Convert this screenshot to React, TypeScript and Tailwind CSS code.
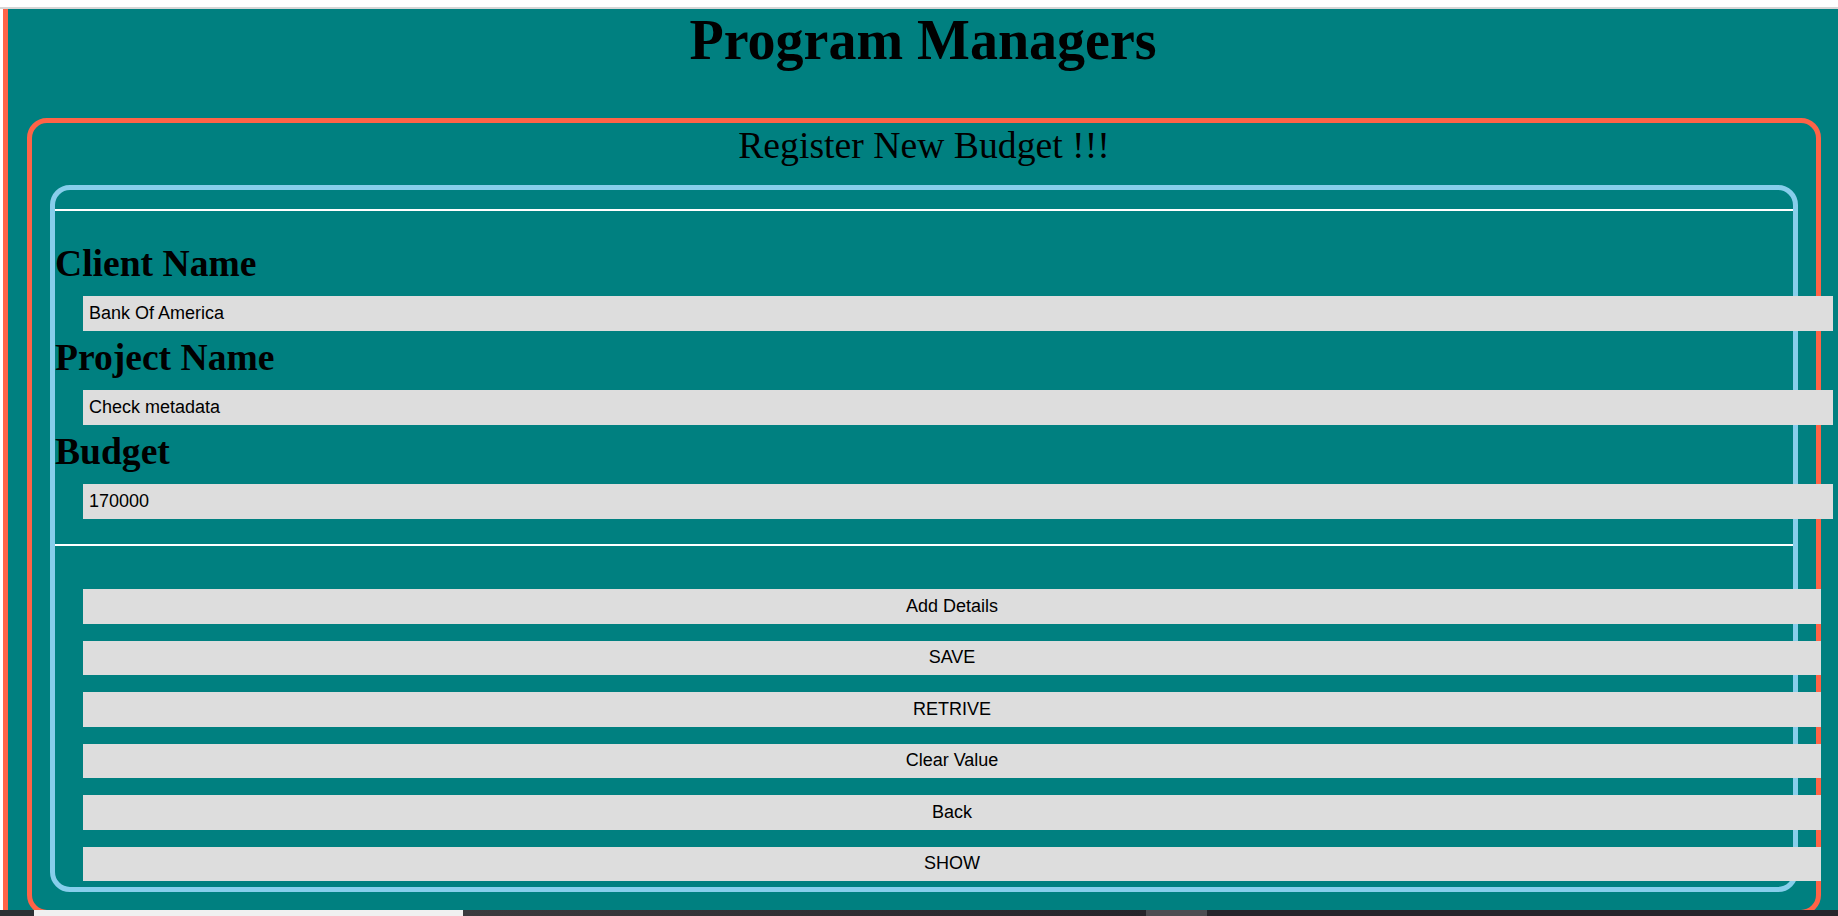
const fields = [
  { label: "Client Name", value: "Bank Of America" },
  { label: "Project Name", value: "Check metadata" },
  { label: "Budget", value: "170000" },
]

const actions = ["Add Details", "SAVE", "RETRIVE", "Clear Value", "Back", "SHOW"]

function BudgetForm() {
  return (
    <div className="mt-[18px] rounded-[20px] border-[5px] border-[#87ceeb] pt-[19px] pb-[6px]">
      <div className="h-[2px] bg-white" />
      <div className="pt-[31px]">
        {fields.map((f, i) => (
          <div key={f.label}>
            <h2 className={`${i === 0 ? "mt-0" : "mt-[5px]"} mb-[10px] text-[37.6px] leading-[44px] font-bold text-black`}>{f.label}</h2>
            <input
              readOnly
              value={f.value}
              className="ml-[28px] box-content block h-[35px] w-full border-0 bg-[#dddddd] px-[6px] py-0 font-['Liberation_Sans',Arial,sans-serif] text-[18px] text-black outline-none"
            />
          </div>
        ))}
      </div>
      <div className="mt-[25px] h-[2px] bg-white" />
      <div className="mt-[43px] flex flex-col gap-[17px]">
        {actions.map((a) => (
          <button
            key={a}
            className="ml-[28px] h-[34.5px] w-full shrink-0 bg-[#dddddd] font-['Liberation_Sans',Arial,sans-serif] text-[18px] text-black"
          >
            {a}
          </button>
        ))}
      </div>
    </div>
  )
}

export default function App() {
  return (
    <div className="min-h-screen bg-white pt-[7px] font-['Liberation_Serif','Times_New_Roman',serif]">
      <div className="border-t-2 border-[#d6d6d6]">
        <div className="ml-[3px] border-l-[5px] border-[#ff6347] bg-[#008080] pb-[20px]">
          <h1 className="m-0 text-center text-[56px] leading-[63px] font-bold text-black">Program Managers</h1>
          <div className="mt-[46px] ml-[19px] mr-[17px] rounded-[20px] border-[5px] border-[#ff6347] px-[18px] pb-[18px]">
            <p className="pt-[1px] text-center text-[37.7px] leading-[43px] text-black">Register New Budget !!!</p>
            <BudgetForm />
          </div>
        </div>
      </div>
      <div className="fixed inset-x-0 bottom-0 flex h-[6px]">
        <div className="w-[34px] bg-[#2b3134]" />
        <div className="w-[429px] bg-[#f0f0f0]" />
        <div className="w-[683px] bg-gradient-to-r from-[#3b3b3e] to-[#26252b]" />
        <div className="w-[61px] bg-[#4d4d52]" />
        <div className="flex-1 bg-[#26252b]" />
      </div>
    </div>
  )
}
